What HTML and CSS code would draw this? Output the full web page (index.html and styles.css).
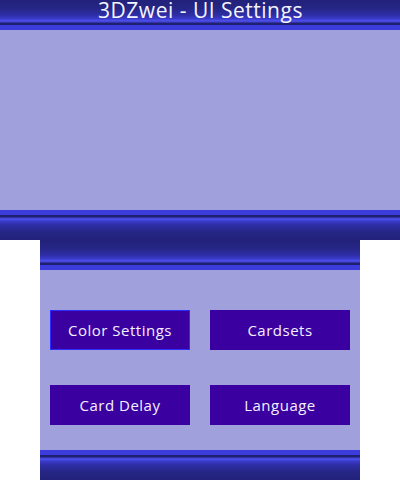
FILE: index.html
```html
<!DOCTYPE html>
<html>
<head>
<meta charset="utf-8">
<link rel="stylesheet" href="styles.css">
</head>
<body>
<div class="screen top-screen">
  <div class="bar bar-top"><span class="title">3DZwei - UI Settings</span></div>
  <div class="content"></div>
  <div class="bar bar-bottom"></div>
</div>
<div class="screen bottom-screen">
  <div class="bar bar-top"></div>
  <div class="content menu">
    <div class="btn selected">Color Settings</div>
    <div class="btn">Cardsets</div>
    <div class="btn">Card Delay</div>
    <div class="btn">Language</div>
  </div>
  <div class="bar bar-bottom"></div>
</div>
</body>
</html>
```
FILE: styles.css
```css
html, body {
  margin: 0;
  padding: 0;
  background: #ffffff;
}
body {
  font-family: "Open Sans", "Noto Sans", sans-serif;
}
.screen {
  display: flex;
  flex-direction: column;
  height: 240px;
}
.top-screen {
  width: 400px;
}
.bottom-screen {
  width: 320px;
  margin-left: 40px;
}
.bar {
  height: 30px;
  flex: none;
  display: flex;
  justify-content: center;
  align-items: flex-start;
}
.bar-top {
  background: linear-gradient(to bottom,
    #22227a 0px, #252584 8px, #2e2ea6 15px, #3a3acc 19px,
    #4848e2 20px, #5050ea 21px, #3a3ac4 22px,
    #2a2a90 23px, #202070 23px, #202070 25px,
    #3c3cdc 25px, #3c3cdc 30px);
}
.bar-bottom {
  background: linear-gradient(to top,
    #22227a 0px, #252584 8px, #2e2ea6 15px, #3a3acc 19px,
    #4848e2 20px, #5050ea 21px, #3a3ac4 22px,
    #2a2a90 23px, #202070 23px, #202070 25px,
    #3c3cdc 25px, #3c3cdc 30px);
}
.title {
  color: #f4f4ff;
  font-size: 21px;
  line-height: 20px;
  letter-spacing: 0.5px;
  padding-left: 1px;
}
.content {
  flex: 1;
  background: #a0a0dc;
}
.menu {
  display: grid;
  grid-template-columns: 140px 140px;
  grid-auto-rows: 40px;
  column-gap: 20px;
  row-gap: 35px;
  padding: 40px 10px 0 10px;
  align-content: start;
}
.btn {
  box-sizing: border-box;
  background: #3a00a0;
  color: #f4f0ff;
  font-size: 15px;
  letter-spacing: 0.5px;
  display: flex;
  align-items: center;
  justify-content: center;
  border: 1px solid #3a00a0;
}
.btn.selected {
  border-color: #2c2cff;
}
```
